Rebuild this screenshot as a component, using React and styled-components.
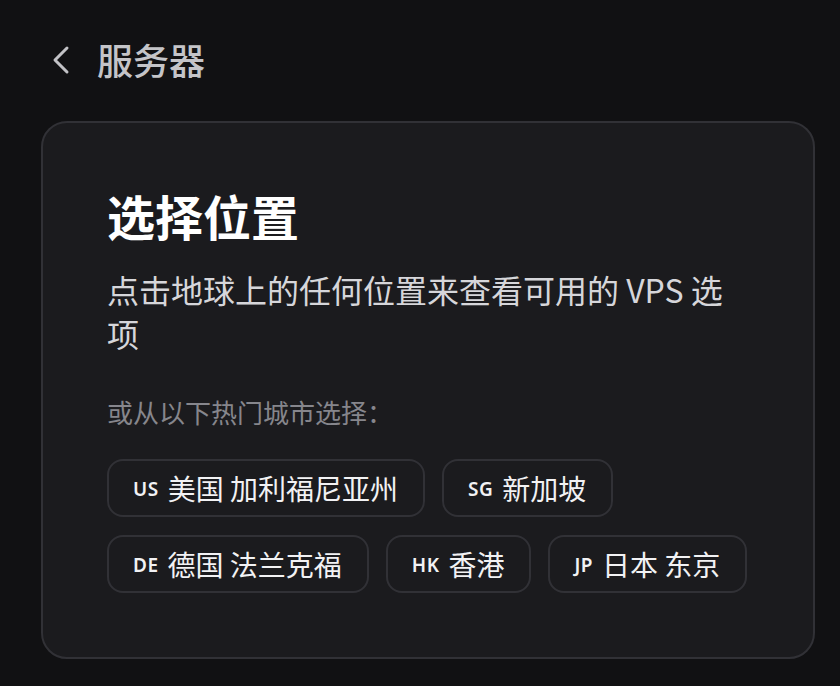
import React from 'react'
import styled, { createGlobalStyle } from 'styled-components'

const GlobalStyle = createGlobalStyle`
  html, body {
    margin: 0;
    padding: 0;
    background: #111113;
  }
  body {
    font-family: "Noto Sans", "Noto Sans CJK SC", sans-serif;
    color: #fff;
  }
`;

const Page = styled.div`
  min-height: 686px;
  padding: 34px 25px 27px 41px;
  box-sizing: border-box;
`;

const Header = styled.div`
  display: flex;
  align-items: center;
  height: 52px;
  margin-bottom: 35px;
`;

const BackButton = styled.button`
  display: flex;
  align-items: center;
  justify-content: center;
  width: 40px;
  height: 40px;
  margin-right: 16px;
  padding: 0;
  border: none;
  background: none;
  color: #c2c2c6;
  cursor: pointer;
`;

const PageTitle = styled.h2`
  margin: 0;
  font-family: "Noto Sans CJK SC", sans-serif;
  font-size: 36px;
  font-weight: 500;
  line-height: 1.2;
  color: #c4c4c8;
`;

const Card = styled.section`
  background: #1b1b1e;
  border: 2px solid #313136;
  border-radius: 26px;
  padding: 64px;
`;

const Title = styled.h1`
  margin: 0;
  font-family: "Noto Sans CJK SC", sans-serif;
  font-size: 48px;
  font-weight: 700;
  line-height: 1.2;
  color: #fff;
`;

const Subtitle = styled.p`
  margin: 22px 0 0;
  font-family: "Noto Sans CJK SC", sans-serif;
  font-size: 32px;
  line-height: 1.4;
  color: #d6d6da;
`;

const Hint = styled.p`
  margin: 38px 0 0;
  font-family: "Noto Sans CJK SC", sans-serif;
  font-size: 26px;
  line-height: 1.4;
  color: #86868c;
`;

const ChipList = styled.div`
  display: flex;
  flex-wrap: wrap;
  gap: 18px 17px;
  margin-top: 28px;
`;

const Chip = styled.button`
  display: flex;
  align-items: center;
  gap: 9px;
  height: 58px;
  padding: 0 25px 0 24px;
  box-sizing: border-box;
  background: #1b1b1e;
  border: 2px solid #313136;
  border-radius: 16px;
  color: #f2f2f4;
  cursor: pointer;
`;

const Code = styled.span`
  font-family: "Noto Sans", sans-serif;
  font-size: 19px;
  font-weight: 600;
  letter-spacing: 0.5px;
  padding-top: 3px;
`;

const City = styled.span`
  font-family: "Noto Sans CJK SC", sans-serif;
  font-size: 28px;
  line-height: 1;
`;

const cities = [
  { code: 'US', name: '美国 加利福尼亚州' },
  { code: 'SG', name: '新加坡' },
  { code: 'DE', name: '德国 法兰克福' },
  { code: 'HK', name: '香港' },
  { code: 'JP', name: '日本 东京' },
];

const ChevronLeft = () => (
  <svg width="20" height="30" viewBox="0 0 20 30" fill="none">
    <polyline points="16,3 4,15 16,27" stroke="currentColor" strokeWidth="3" strokeLinecap="round" strokeLinejoin="round" />
  </svg>
);

const App = () => {
  return <>
    <GlobalStyle />
    <Page>
      <Header>
        <BackButton><ChevronLeft /></BackButton>
        <PageTitle>服务器</PageTitle>
      </Header>
      <Card>
        <Title>选择位置</Title>
        <Subtitle>点击地球上的任何位置来查看可用的 VPS 选项</Subtitle>
        <Hint>或从以下热门城市选择：</Hint>
        <ChipList>
          {cities.map(c => (
            <Chip key={c.code}>
              <Code>{c.code}</Code>
              <City>{c.name}</City>
            </Chip>
          ))}
        </ChipList>
      </Card>
    </Page>
  </>
}

export default App
